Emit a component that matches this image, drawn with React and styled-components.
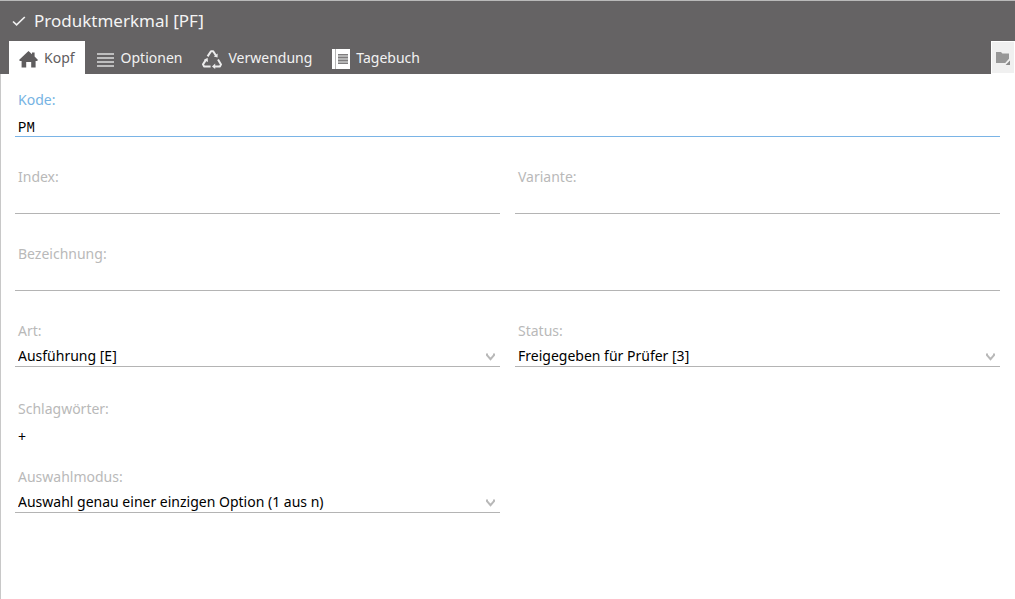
import React, { useState } from 'react';
import styled, { createGlobalStyle } from 'styled-components';

const statusOptions = ['In Bearbeitung [1]', 'In Prüfung [2]', 'Freigegeben für Prüfer [3]'];
const kindOptions = ['Ausführung [E]', 'Variante [V]'];
const modeOptions = [
  'Auswahl genau einer einzigen Option (1 aus n)',
  'Auswahl mehrerer Optionen (m aus n)',
];

const CheckIcon = () => (
  <svg width="14" height="12" viewBox="0 0 14 12" aria-hidden="true">
    <path d="M1 6.5l3.6 3.4L12.8 2" fill="none" stroke="#f0f0f0" strokeWidth="1.7" />
  </svg>
);

const HomeIcon = () => (
  <svg width="19" height="20" viewBox="0 0 19 20" aria-hidden="true">
    <path
      d="M9.5 2L13 5.2V3.4h2.6v4.2L19 11l-1 1h-1.4v6.6h-4.4V13H7.2v5.6H2.6V12H1L0 11z"
      fill="#5f5d5e"
    />
  </svg>
);

const ListIcon = () => (
  <svg width="20" height="20" viewBox="0 0 20 20" aria-hidden="true">
    <path d="M2 5h17M2 9h17M2 13h17M2 17h17" stroke="#bebebe" strokeWidth="2" />
  </svg>
);

const RecycleIcon = () => (
  <svg width="20" height="20" viewBox="0 0 20 20" aria-hidden="true">
    <g fill="none" stroke="#ececec" strokeWidth="2" strokeLinejoin="round">
      <path d="M5.6 7.4L9 2.2h2.2l3 4.8" />
      <path d="M16 10.4l3 5-1 2h-5" />
      <path d="M8.6 17.4H2l-1-2 3.2-5" />
    </g>
    <path d="M15.6 4.6v3.8l-3.8-1zM13.2 14.6V20L10 17.4zM1.8 11l3.8-2.2.4 4.2z" fill="#ececec" />
  </svg>
);

const DiaryIcon = () => (
  <svg width="18" height="20" viewBox="0 0 18 20" aria-hidden="true">
    <path d="M0 0h3v20H0zM4 0h14v20H4z" fill="#fff" />
    <path d="M3 0h1v20H3z" fill="#b5b5b5" />
    <path d="M6 5h10v10H6z" fill="#b5b5b5" />
    <path d="M6 5.5h10M6 8.5h10M6 11.5h10M6 14.5h10" stroke="#7f7d7e" />
  </svg>
);

const FolderIcon = () => (
  <svg width="14" height="14" viewBox="0 0 14 14" aria-hidden="true">
    <path d="M0 1h5l1.4 1.4H13v5.4L9.2 12H0z" fill="#979797" />
    <path d="M14 9.4V14H9.6z" fill="#8a8a8a" />
  </svg>
);

const ChevronIcon = () => (
  <svg width="9" height="8" viewBox="0 0 9 8" aria-hidden="true">
    <path d="M1 .6v1.6l3.5 4 3.5-4V.6" fill="none" stroke="#b8b8b8" strokeWidth="2" />
  </svg>
);

const tabs = [
  { id: 'kopf', label: 'Kopf', icon: <HomeIcon /> },
  { id: 'optionen', label: 'Optionen', icon: <ListIcon /> },
  { id: 'verwendung', label: 'Verwendung', icon: <RecycleIcon /> },
  { id: 'tagebuch', label: 'Tagebuch', icon: <DiaryIcon /> },
];

const TextField = ({ id, label, value, active, wide }) => (
  <Field $wide={wide}>
    <Label htmlFor={id} $active={active}>{label}</Label>
    <Input id={id} defaultValue={value} $active={active} />
  </Field>
);

const SelectField = ({ id, label, options, value }) => (
  <Field>
    <Label htmlFor={id}>{label}</Label>
    <SelectBox>
      <Select id={id} defaultValue={value}>
        {options.map((option) => (
          <option key={option}>{option}</option>
        ))}
      </Select>
      <ChevronIcon />
    </SelectBox>
  </Field>
);

const App = () => {
  const [activeTab, setActiveTab] = useState('kopf');

  return (
    <>
      <GlobalStyle />
      <Page>
        <Header>
          <TitleBar>
            <CheckIcon />
            <h1>Produktmerkmal [PF]</h1>
          </TitleBar>
          <TabBar>
            <Tabs role="tablist">
              {tabs.map((tab) => (
                <Tab
                  key={tab.id}
                  type="button"
                  role="tab"
                  aria-selected={tab.id === activeTab}
                  $active={tab.id === activeTab}
                  onClick={() => setActiveTab(tab.id)}
                >
                  {tab.icon}
                  {tab.label}
                </Tab>
              ))}
            </Tabs>
            <FolderButton type="button" aria-label="Ordner">
              <FolderIcon />
            </FolderButton>
          </TabBar>
        </Header>
        <Form>
          <TextField id="kode" label="Kode:" value="PM" active wide />
          <TextField id="index" label="Index:" />
          <TextField id="variante" label="Variante:" />
          <TextField id="bezeichnung" label="Bezeichnung:" wide />
          <SelectField id="art" label="Art:" options={kindOptions} value={kindOptions[0]} />
          <SelectField id="status" label="Status:" options={statusOptions} value={statusOptions[2]} />
          <Keywords>
            <Label as="span">Schlagwörter:</Label>
            <AddButton type="button" aria-label="Schlagwort hinzufügen">+</AddButton>
          </Keywords>
          <SelectField id="modus" label="Auswahlmodus:" options={modeOptions} value={modeOptions[0]} />
        </Form>
      </Page>
    </>
  );
};

const GlobalStyle = createGlobalStyle`
  * {
    box-sizing: border-box;
  }
  body {
    margin: 0;
    background: #fff;
  }
  body, button, input, select {
    font-family: "Noto Sans", "Open Sans", sans-serif;
    font-size: 14px;
  }
`;

const Page = styled.div`
  display: flex;
  flex-direction: column;
  min-height: 100vh;
`;

const Header = styled.header`
  background: #656364;
  border-top: 1px solid #b9b9b9;
`;

const TitleBar = styled.div`
  display: flex;
  align-items: center;
  gap: 8px;
  height: 40px;
  padding-left: 12px;
  h1 {
    margin: 0;
    color: #f4f4f4;
    font-size: 17px;
    font-weight: 400;
    line-height: 24px;
  }
`;

const TabBar = styled.div`
  display: flex;
  justify-content: space-between;
  padding-left: 9px;
`;

const Tabs = styled.div`
  display: flex;
`;

const Tab = styled.button`
  display: flex;
  align-items: center;
  gap: 6px;
  height: 33px;
  padding: 0 10px;
  border: 0;
  background: ${({ $active }) => ($active ? '#fff' : 'transparent')};
  color: ${({ $active }) => ($active ? '#5f5d5e' : '#f2f2f2')};
  cursor: pointer;
  svg {
    margin-top: 2px;
  }
`;

const FolderButton = styled.button`
  display: flex;
  align-items: center;
  justify-content: center;
  width: 24px;
  height: 33px;
  padding: 0;
  border: 1px solid #fff;
  background: #f0f0f0;
`;

const Form = styled.form`
  display: grid;
  flex: 1;
  grid-template-columns: 1fr 1fr;
  align-content: start;
  column-gap: 15px;
  padding: 16px 15px 0 14px;
  border-left: 1px solid #c8c8c8;
`;

const Field = styled.div`
  display: flex;
  flex-direction: column;
  min-width: 0;
  padding-bottom: 30px;
  grid-column: ${({ $wide }) => ($wide ? '1 / -1' : 'auto')};
`;

const Label = styled.label`
  padding-left: 3px;
  color: ${({ $active }) => ($active ? '#76b3e3' : '#b9b9b9')};
  line-height: 20px;
`;

const Input = styled.input`
  width: 100%;
  height: 27px;
  padding: 10px 3px 0;
  border: 0;
  border-bottom: 1px solid ${({ $active }) => ($active ? '#7ab4e6' : '#b4b4b4')};
  outline: 0;
  background: transparent;
  color: #000;
  font-family: "Liberation Mono", monospace;
`;

const SelectBox = styled.div`
  display: flex;
  align-items: flex-end;
  height: 26px;
  padding-right: 5px;
  border-bottom: 1px solid #b4b4b4;
  svg {
    margin-bottom: 5px;
  }
`;

const Select = styled.select`
  flex: 1;
  min-width: 0;
  height: 24px;
  padding: 3px 3px 0;
  border: 0;
  outline: 0;
  appearance: none;
  background: transparent;
  color: #000;
`;

const Keywords = styled.div`
  display: flex;
  flex-direction: column;
  align-items: flex-start;
  gap: 8px;
  grid-column: 1 / -1;
  padding: 2px 0 20px;
`;

const AddButton = styled.button`
  padding: 0 3px;
  border: 0;
  background: transparent;
  color: #000;
  line-height: 20px;
`;

export default App;
